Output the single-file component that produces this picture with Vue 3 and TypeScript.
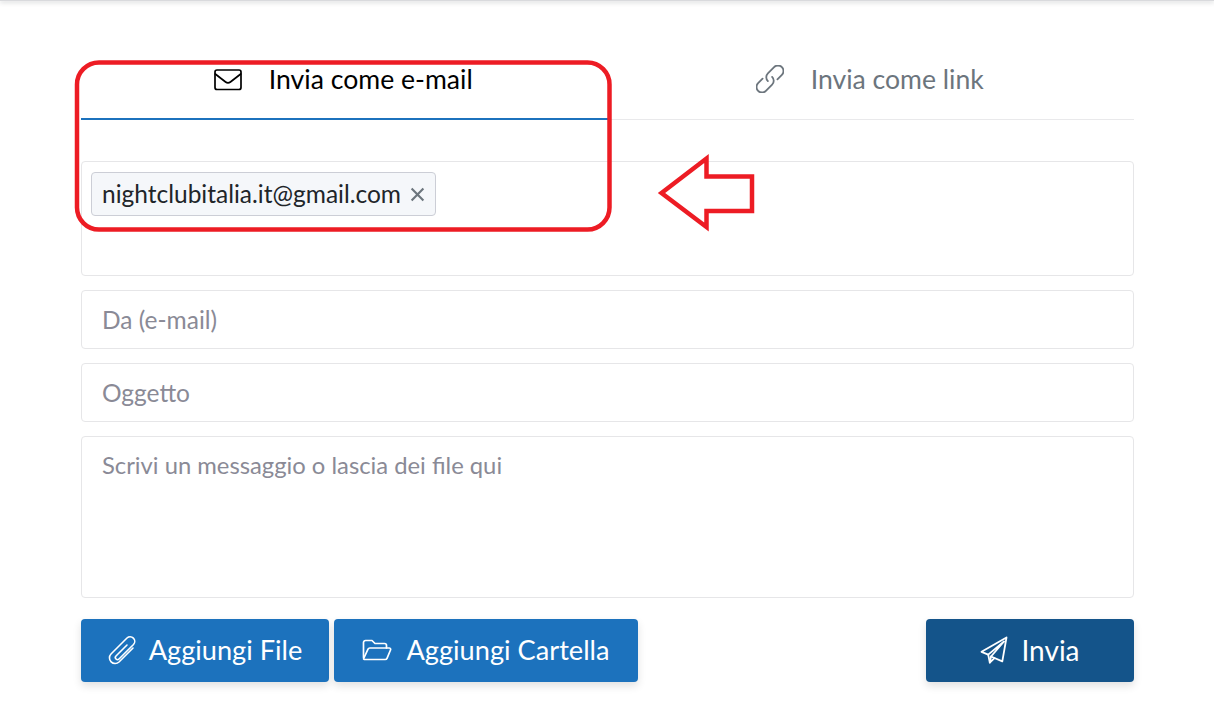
<script setup lang="ts">
import { ref } from 'vue'
const tabs = [
  { id: 'email', label: 'Invia come e-mail' },
  { id: 'link', label: 'Invia come link' },
]
const active = ref('email')
const recipients = ref(['nightclubitalia.it@gmail.com'])
</script>

<template>
  <div class="page">
    <div class="topbar"></div>
    <main class="content">
      <nav class="tabs">
        <button
          v-for="t in tabs"
          :key="t.id"
          class="tab"
          :class="{ active: active === t.id }"
          @click="active = t.id"
        >
          <svg v-if="t.id === 'email'" class="tab-icon mail" viewBox="0 0 28 22" fill="none" stroke="currentColor" stroke-width="1.7" stroke-linejoin="round" stroke-linecap="round">
            <rect x="1" y="1" width="26" height="19.500" rx="2" />
            <path d="M1.300 5 11.600 13a4 4 0 0 0 4.800 0L26.700 5" />
          </svg>
          <svg v-else class="tab-icon chain" viewBox="0 0 28 28" fill="none" stroke="currentColor" stroke-width="1.800" stroke-linecap="round">
            <g transform="rotate(-45 14 14)">
              <path d="M9 8.500H2.700a5.500 5.500 0 0 0 0 11H11.500a5.500 5.500 0 0 0 5.500-5.500" />
              <path d="M19 19.500H25.300a5.500 5.500 0 0 0 0-11H16.500a5.500 5.500 0 0 0-5.500 5.500" />
            </g>
          </svg>
          <span>{{ t.label }}</span>
        </button>
      </nav>

      <form class="form" @submit.prevent>
        <div class="field recipients">
          <span v-for="r in recipients" :key="r" class="chip">
            {{ r }}
            <svg class="chip-x" viewBox="0 0 14 14" stroke="currentColor" stroke-width="2" fill="none">
              <path d="M1.500 1.500l11 11M12.500 1.500l-11 11" />
            </svg>
          </span>
        </div>
        <input class="field line" placeholder="Da (e-mail)" />
        <input class="field line" placeholder="Oggetto" />
        <textarea class="field message" placeholder="Scrivi un messaggio o lascia dei file qui"></textarea>

        <div class="actions">
          <div class="left">
            <button type="button" class="btn file">
              <svg class="btn-icon clip" viewBox="0 0 28 30" fill="none" stroke="currentColor" stroke-width="1.600" stroke-linecap="round" stroke-linejoin="round">
                <path d="M19 10 8 21a2.100 2.100 0 0 0 3 3L25.500 9.500a4.600 4.600 0 0 0-6.500-6.500L3 19a5.660 5.660 0 0 0 8 8L25 13" />
              </svg>
              <span>Aggiungi File</span>
            </button>
            <button type="button" class="btn folder">
              <svg class="btn-icon wide" viewBox="0 0 30 22" fill="none" stroke="currentColor" stroke-width="1.700" stroke-linejoin="round" stroke-linecap="round">
                <path d="M1.500 18.500V3.500a2 2 0 0 1 2-2h6.500l3 3h9.500a2 2 0 0 1 2 2v2.500" />
                <path d="M1.700 19.500 6 10.200a2 2 0 0 1 1.800-1.200h19.400c1.100 0 1.800 1.100 1.300 2L25 19.300a2 2 0 0 1-1.800 1.200H3.200c-1.100 0-1.900-.2-1.500-1z" />
              </svg>
              <span>Aggiungi Cartella</span>
            </button>
          </div>
          <button type="button" class="btn send">
            <svg class="btn-icon plane" viewBox="0 0 28 28" fill="none" stroke="currentColor" stroke-width="1.800" stroke-linejoin="round" stroke-linecap="round">
              <path d="M26.500 1.500 1.500 15.800l6.700 2.800L24 5.500 11 20.500l11.300 4.800z" />
              <path d="M8.200 18.600l1.600 7.900 4.700-4.300" />
              <path d="M11 20.500 9.800 26.500" />
            </svg>
            <span class="send-label">Invia</span>
          </button>
        </div>
      </form>
    </main>

    <svg class="marks" width="1214" height="705" viewBox="0 0 1214 705" fill="none" stroke="#ed1c24">
      <rect x="77" y="62.500" width="532.500" height="167" rx="22" stroke-width="4.500" />
      <path d="M661.500 193 706.500 158.500V176.500H752V211H706.500V227z" stroke-width="4.500" stroke-linejoin="miter" />
    </svg>
  </div>
</template>

<style>
html, body { margin: 0; background: #fff; }
</style>

<style scoped>
.page {
  position: relative;
  width: 1214px;
  height: 705px;
  overflow: hidden;
  background: #fff;
  font-family: Lato, "Open Sans", sans-serif;
}
.topbar {
  height: 1px;
  background: #d9dadd;
  box-shadow: 0 1px 4px rgba(60, 64, 72, 0.5);
}
.content {
  padding: 51px 80px 0 81px;
}
.tabs {
  display: grid;
  grid-template-columns: 1fr 1fr;
  box-sizing: border-box;
  height: 68px;
  border-bottom: 1px solid #e9e9eb;
}
.tab {
  display: flex;
  justify-content: center;
  align-items: flex-start;
  gap: 27px;
  box-sizing: border-box;
  height: 68px;
  padding: 11px 2px 0 0;
  border: 0;
  border-bottom: 2px solid transparent;
  background: none;
  color: #6c757d;
  font: 400 26.600px/32px Lato, sans-serif;
  cursor: pointer;
}
.tab.active {
  color: #000;
  border-bottom-color: #1c72bd;
}
.tab-icon {
  width: 28px;
  height: 28px;
  flex: none;
}
.mail { margin-top: 3px; }
.chain { margin-top: 2px; }
.form {
  display: flex;
  flex-direction: column;
  gap: 14px;
  padding-top: 41px;
}
.field {
  display: block;
  box-sizing: border-box;
  width: 100%;
  border: 1px solid #e6e6e8;
  border-radius: 4px;
  background: #fff;
  color: #212529;
  font: 400 24.500px/30px Lato, sans-serif;
  outline: none;
}
.field::placeholder {
  color: #8a8a96;
  opacity: 1;
}
.recipients {
  height: 115px;
  padding: 10px 9px;
  display: flex;
  align-items: flex-start;
}
.chip {
  display: inline-flex;
  align-items: center;
  gap: 9px;
  box-sizing: border-box;
  height: 44px;
  padding: 0 10px 0 10px;
  border: 1px solid #ccced6;
  border-radius: 4px;
  background: #f5f7fa;
  color: #212529;
}
.chip-x {
  width: 15px;
  height: 15px;
  color: #6c757d;
}
.line {
  height: 59px;
  padding: 0 20px;
}
.message {
  height: 162px;
  padding: 13px 20px;
  font-size: 23.800px;
  resize: none;
}
.actions {
  display: flex;
  justify-content: space-between;
  padding-top: 7px;
}
.left {
  display: flex;
  gap: 5px;
}
.btn {
  display: flex;
  align-items: center;
  justify-content: center;
  box-sizing: border-box;
  height: 63px;
  padding: 0 0 2px;
  border: 0;
  border-radius: 4px;
  color: #fff;
  font: 400 27.200px/34px Lato, sans-serif;
  box-shadow: 0 4px 8px rgba(0, 0, 0, 0.12);
  cursor: pointer;
}
.file { width: 248px; background: #1c72bd; gap: 13px; }
.folder { width: 304px; background: #1c72bd; gap: 14px; }
.send { width: 208px; background: #14548a; gap: 13px; }
.send-label { font-size: 28px; }
.btn-icon { flex: none; }
.clip { width: 28px; height: 30px; }
.wide { width: 30px; height: 22px; }
.plane { width: 28px; height: 28px; }
.marks {
  position: absolute;
  left: 0;
  top: 0;
  pointer-events: none;
}
</style>
